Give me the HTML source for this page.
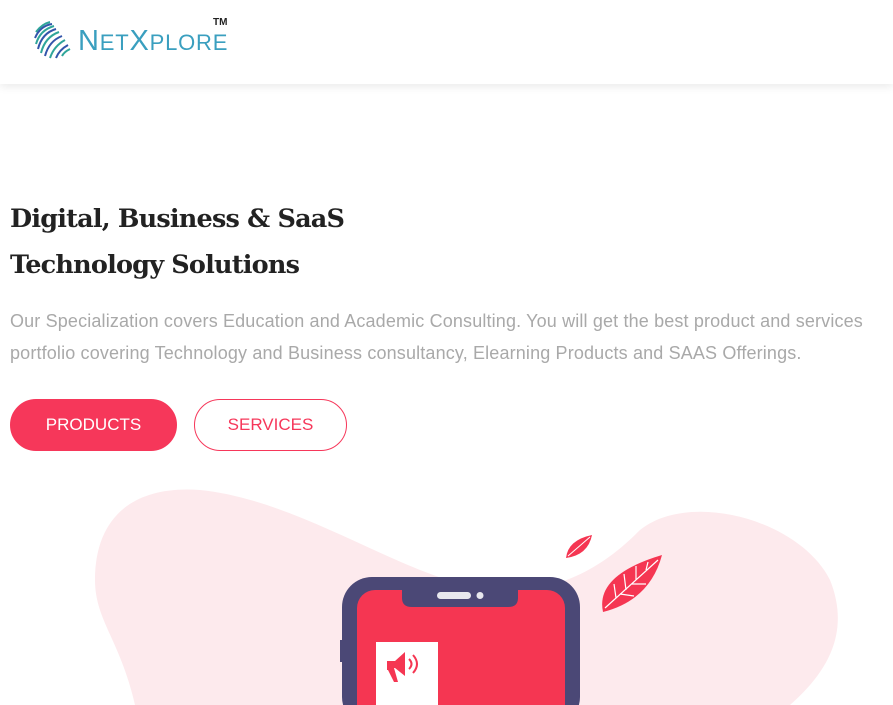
<!DOCTYPE html>
<html><head><meta charset="utf-8"><style>
*{margin:0;padding:0;box-sizing:border-box}
body{width:893px;height:705px;overflow:hidden;background:#fff;font-family:"Liberation Sans",sans-serif;position:relative}
.hdr{position:absolute;left:0;top:0;width:893px;height:84px;background:#fff;box-shadow:0 3px 8px rgba(0,0,0,0.08);z-index:2}
.logo{position:absolute;left:78px;top:25px;font-size:29px;color:#3a9fbf;letter-spacing:0.8px}
.logo small{font-size:22px}
.tm{position:absolute;left:213px;top:17px;font-size:10px;font-weight:bold;color:#222}
h1{position:absolute;left:10px;top:196px;font-family:"DejaVu Serif",serif;font-weight:bold;font-size:25.5px;line-height:46px;color:#222;letter-spacing:-0.8px}
p{position:absolute;left:10px;top:305px;width:875px;font-size:18px;line-height:32px;color:#a9a9a9;letter-spacing:0.15px}
.b{position:absolute;top:399px;height:52px;border-radius:26px;font-size:17px;text-align:center;line-height:50px}
.b1{left:10px;width:167px;background:#f6375a;color:#fff;border:1px solid #f6375a}
.b2{left:194px;width:153px;border:1px solid #f6375a;color:#f6375a}
svg.ill{position:absolute;left:0;top:0}
</style></head><body>
<div class="hdr">
<svg width="46" height="46" style="position:absolute;left:32px;top:16px" viewBox="0 0 46 46" fill="none" stroke-width="2">
<path d="M4 16 Q10 8 18 6" stroke="#2fa59a"/><path d="M3 22 Q8 10 20 8" stroke="#3355aa"/>
<path d="M4 28 Q8 14 22 10" stroke="#2fa59a"/><path d="M6 33 Q10 17 24 13" stroke="#3355aa"/>
<path d="M9 37 Q13 21 27 16" stroke="#2fa59a"/><path d="M13 40 Q17 25 30 20" stroke="#3355aa"/>
<path d="M18 42 Q22 30 33 24" stroke="#2fa59a"/><path d="M24 42 Q27 34 36 29" stroke="#3355aa"/>
<path d="M30 40 Q32 36 38 33" stroke="#2fa59a"/>
</svg>
<div class="logo">N<small>ET</small>X<small>PLORE</small></div>
<div class="tm">TM</div>
</div>
<svg class="ill" width="893" height="705">
<path d="M135 705 C120 640 95 620 95 580 C95 520 130 485 200 490 C300 500 400 575 480 588 C560 600 610 560 640 530 C690 490 800 520 830 580 C850 630 830 670 790 705 Z" fill="#fdeaed"/>
<rect x="342" y="577" width="238" height="150" rx="30" fill="#4b4876"/>
<rect x="340" y="640" width="4" height="22" fill="#4b4876"/>
<rect x="357" y="590" width="208" height="140" rx="18" fill="#f53652"/>
<path d="M402 589 H518 V598 Q518 607 508 607 H412 Q402 607 402 598 Z" fill="#4b4876"/>
<rect x="437" y="592" width="34" height="7" rx="3.5" fill="#e8e8ee"/>
<circle cx="480" cy="595.5" r="3.5" fill="#e8e8ee"/>
<rect x="376" y="642" width="62" height="63" fill="#fff"/>
<path d="M387 661 h8 l10-9 v24 l-10-8 h-1 l4 14 h-4 l-6-12 h-1 Z" fill="#f53652"/>
<path d="M409 659 q5 5 0 10 M413 655 q8 9 0 18" stroke="#f53652" stroke-width="2" fill="none"/>
<path d="M566 558 Q568 540 592 535 Q588 555 566 558 Z" fill="#f53652"/>
<path d="M568 556 L590 537" stroke="#fff" stroke-width="1" fill="none"/>
<path d="M603 612 Q595 575 662 555 Q650 600 603 612 Z" fill="#f53652"/>
<path d="M605 608 L658 560 M616 598 l-2-14 M626 590 l-2-16 M636 580 l0-14 M646 570 l2-8 M620 594 l14 2 M632 584 l14 0" stroke="#fff" stroke-width="1.2" fill="none"/>
</svg>
<h1>Digital, Business &amp; SaaS<br>Technology Solutions</h1>
<p>Our Specialization covers Education and Academic Consulting. You will get the best product and services portfolio covering Technology and Business consultancy, Elearning Products and SAAS Offerings.</p>
<div class="b b1">PRODUCTS</div>
<div class="b b2">SERVICES</div>
</body></html>
